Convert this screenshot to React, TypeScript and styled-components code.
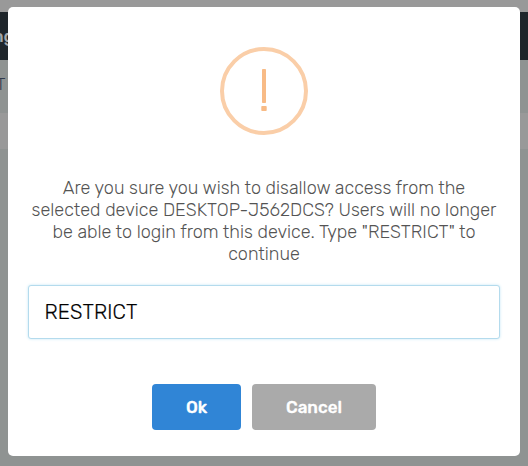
import React from 'react';
import styled, { createGlobalStyle } from 'styled-components';

const GlobalStyle = createGlobalStyle`
  * { box-sizing: border-box; }
  body { margin: 0; overflow: hidden; font-family: Rubik, Roboto, sans-serif; }
`;

const Page = styled.div`
  width: 528px;
  height: 466px;
  padding-top: 12px;
  display: flex;
  flex-direction: column;
  background: #999;
  overflow: hidden;
`;

const NavBar = styled.header`
  height: 48px;
  flex: none;
  background: #1f262b;
  color: #a3a7aa;
  font-size: 17px;
  font-weight: 500;
  line-height: 48px;
`;

const NavLabel = styled.span`
  margin-left: -7px;
`;

const TitleBar = styled.div`
  height: 53px;
  flex: none;
  background: #8f9392;
  color: #303a4c;
  font-size: 17px;
  font-weight: 300;
  line-height: 48px;
`;

const TitleLabel = styled.span`
  margin-left: -4px;
`;

const Gap = styled.div`
  height: 36px;
  flex: none;
`;

const Content = styled.main`
  flex: 1;
  background: #8f9392;
`;

const Overlay = styled.div`
  position: fixed;
  inset: 0;
  padding: 7px 8px 10px;
`;

const Modal = styled.section`
  width: 512px;
  height: 449px;
  padding: 40px 20px 26px;
  display: flex;
  flex-direction: column;
  align-items: center;
  background: #fff;
  border-radius: 5px;
`;

const WarningIcon = styled.svg`
  display: block;
  flex: none;
`;

const Message = styled.p`
  margin: 42px 0 0;
  color: #545454;
  font-size: 18px;
  font-weight: 300;
  line-height: 22px;
  text-align: center;
`;

const Field = styled.input`
  width: 472px;
  height: 54px;
  margin-top: 20px;
  padding: 0 15.5px;
  flex: none;
  border: 1px solid #b4dbed;
  border-radius: 3px;
  box-shadow: 0 0 3px #c4e6f5;
  outline: none;
  background: #fff;
  color: #000;
  font-family: inherit;
  font-size: 20.5px;
  font-weight: 300;
  letter-spacing: 0.15px;
  -webkit-text-stroke: 0.2px #000;
`;

const Actions = styled.footer`
  margin-top: 45px;
  display: flex;
  gap: 11px;
`;

const Button = styled.button<{ $primary?: boolean }>`
  width: ${({ $primary }) => ($primary ? 89 : 124)}px;
  height: 46px;
  padding: 0;
  border: 0;
  border-radius: 4px;
  background: ${({ $primary }) => ($primary ? '#3085d6' : '#aaa')};
  color: #fff;
  font-family: inherit;
  font-size: 17px;
  font-weight: 500;
  -webkit-text-stroke: 0.3px #fff;
`;

export default function App() {
  return (
    <>
      <GlobalStyle />
      <Page>
        <NavBar><NavLabel>ng</NavLabel></NavBar>
        <TitleBar><TitleLabel>T</TitleLabel></TitleBar>
        <Gap />
        <Content />
      </Page>
      <Overlay>
        <Modal role="dialog">
          <WarningIcon width="88" height="88" viewBox="0 0 88 88">
            <circle cx="44" cy="44" r="42" fill="none" stroke="#facea8" strokeWidth="4" />
            <rect x="42" y="22" width="4" height="34" rx="0.8" fill="#f8bb86" />
            <rect x="41.3" y="59" width="5.4" height="5" rx="0.8" fill="#f8bb86" />
          </WarningIcon>
          <Message>
            Are you sure you wish to disallow access from the selected device
            DESKTOP-J562DCS? Users will no longer be able to login from this
            device. Type "RESTRICT" to continue
          </Message>
          <Field defaultValue="RESTRICT" />
          <Actions>
            <Button $primary>Ok</Button>
            <Button>Cancel</Button>
          </Actions>
        </Modal>
      </Overlay>
    </>
  );
}
